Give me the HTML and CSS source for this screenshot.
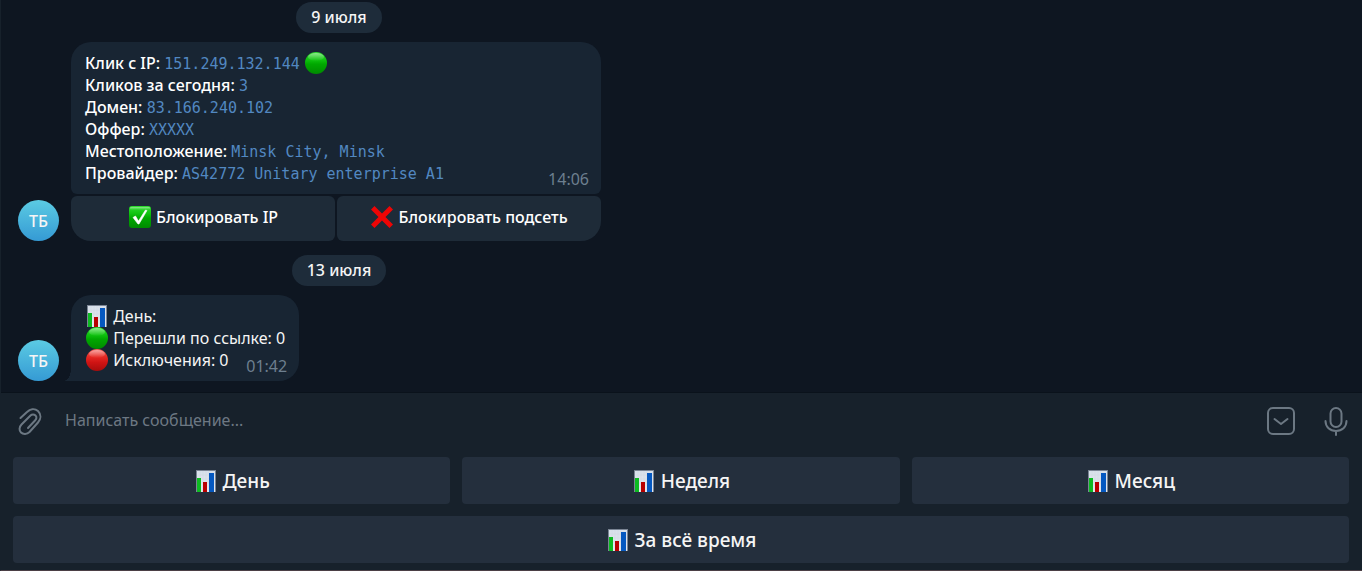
FILE: index.html
```html
<!DOCTYPE html>
<html lang="ru">
<head>
  <meta charset="UTF-8">
  <meta name="viewport" content="width=device-width, initial-scale=1.0">
  <title>Чат</title>
  <link rel="stylesheet" href="styles.css">
</head>
<body>

<!-- emoji shared by messages and buttons -->
<svg class="sprite" aria-hidden="true">
  <defs>
    <linearGradient id="greenFill" x1="0" y1="0" x2="0" y2="1">
      <stop offset="0" stop-color="#2fdc2f"/><stop offset=".35" stop-color="#0fc30f"/><stop offset=".55" stop-color="#00a800"/><stop offset="1" stop-color="#008a00"/>
    </linearGradient>
    <linearGradient id="redFill" x1="0" y1="0" x2="0" y2="1">
      <stop offset="0" stop-color="#f4605a"/><stop offset=".35" stop-color="#e62a24"/><stop offset=".6" stop-color="#d01414"/><stop offset="1" stop-color="#a80c0c"/>
    </linearGradient>
    <linearGradient id="shine" x1="0" y1="0" x2="0" y2="1">
      <stop offset="0" stop-color="#fff" stop-opacity=".45"/><stop offset="1" stop-color="#fff" stop-opacity="0"/>
    </linearGradient>
    <linearGradient id="paper" x1="0" y1="0" x2="0" y2="1">
      <stop offset="0" stop-color="#d8e0ea"/><stop offset="1" stop-color="#e4e8ee"/>
    </linearGradient>
  </defs>
  <symbol id="green" viewBox="0 0 22 22">
    <circle cx="11" cy="11" r="11" fill="url(#greenFill)"/>
    <ellipse cx="11" cy="5" rx="8" ry="4" fill="url(#shine)"/>
  </symbol>
  <symbol id="red" viewBox="0 0 22 22">
    <circle cx="11" cy="11" r="11" fill="url(#redFill)"/>
    <ellipse cx="11" cy="5" rx="8" ry="4" fill="url(#shine)"/>
  </symbol>
  <symbol id="chart" viewBox="0 0 22 22">
    <rect x="1" width="20" height="22" fill="#7b8594"/>
    <rect x="2" y="1" width="18" height="21" fill="url(#paper)"/>
    <path d="M5 1v21M8 1v21M11 1v21M14 1v21M2 5h18M2 9h18M2 13h18" stroke="#c9d3df" stroke-width=".4"/>
    <rect x="2" y="8" width="4" height="14" fill="#0dba22"/>
    <rect x="8" y="12" width="4" height="10" fill="#b80000"/>
    <rect x="14" y="3" width="5" height="19" fill="#0558c0"/>
  </symbol>
  <symbol id="check" viewBox="0 0 22 22">
    <rect width="22" height="22" rx="3" fill="url(#greenFill)"/>
    <rect x="1" y="1" width="20" height="3" rx="1" fill="url(#shine)"/>
    <path d="M4 11.500l2.500-1.500 3 5L16.500 4l1.500.5L10 18H9z" fill="#fff" stroke="#fff" stroke-width=".6" stroke-linejoin="round"/>
  </symbol>
  <symbol id="cross" viewBox="0 0 22 22">
    <path d="M3.500 0L11 7.500 18.500 0 22 3.500 14.500 11l7.500 7.500-3.500 3.500L11 14.500 3.500 22 0 18.500 7.500 11 0 3.500z" fill="#ee0505"/>
  </symbol>
</svg>

<main class="chat">
  <div class="history">
    <div class="date">9 июля</div>

    <div class="message">
      <div class="avatar">ТБ</div>
      <div class="content wide">
        <div class="bubble with-buttons">
          <p><b>Клик с IP:</b> <code>151.249.132.144</code> <svg class="emoji"><use href="#green"/></svg></p>
          <p><b>Кликов за сегодня:</b> <code>3</code></p>
          <p><b>Домен:</b> <code>83.166.240.102</code></p>
          <p><b>Оффер:</b> <code>XXXXX</code></p>
          <p><b>Местоположение:</b> <code>Minsk City, Minsk</code></p>
          <div class="last-line">
            <p><b>Провайдер:</b> <code>AS42772 Unitary enterprise A1</code></p>
            <time>14:06</time>
          </div>
        </div>
        <div class="inline-buttons">
          <button><svg class="emoji"><use href="#check"/></svg> Блокировать IP</button>
          <button><svg class="emoji"><use href="#cross"/></svg> Блокировать подсеть</button>
        </div>
      </div>
    </div>

    <div class="date">13 июля</div>

    <div class="message">
      <div class="avatar">ТБ</div>
      <div class="content">
        <div class="bubble tail">
          <p><svg class="emoji"><use href="#chart"/></svg> День:</p>
          <p><svg class="emoji"><use href="#green"/></svg> Перешли по ссылке: 0</p>
          <div class="last-line">
            <p><svg class="emoji"><use href="#red"/></svg> Исключения: 0</p>
            <time>01:42</time>
          </div>
        </div>
      </div>
    </div>
  </div>
</main>

<footer class="composer">
  <div class="input-row">
    <button class="icon" aria-label="Прикрепить файл">
      <svg width="28" height="30" viewBox="0 0 28 30"><path d="M4.500 12L11 6C14 3 18.500 2 22 5C25.500 8.500 25 13 22 16.500L13.500 26C11 28.500 7 28.500 5 26.500C3 24.500 3 21 5.500 18.500L14.500 9.500C16 8 18 8 19.500 9.500C21 11 20.500 13 19 14.500L12 22"/></svg>
    </button>
    <input type="text" aria-label="Сообщение" placeholder="Написать сообщение...">
    <button class="icon" aria-label="Скрыть клавиатуру">
      <svg width="28" height="28" viewBox="0 0 28 28"><rect x="1" y="1" width="26" height="26" rx="5"/><path d="M7.500 12l6.500 5 6.500-5"/></svg>
    </button>
    <button class="icon" aria-label="Голосовое сообщение">
      <svg width="24" height="30" viewBox="0 0 24 30"><rect x="6.500" y="2" width="11" height="19" rx="5.500"/><path d="M1.500 15c0 6 4.500 10 10.500 10s10.500-4 10.500-10M12 25v4"/></svg>
    </button>
  </div>
  <div class="keyboard">
    <button><svg class="emoji"><use href="#chart"/></svg> День</button>
    <button><svg class="emoji"><use href="#chart"/></svg> Неделя</button>
    <button><svg class="emoji"><use href="#chart"/></svg> Месяц</button>
    <button class="full"><svg class="emoji"><use href="#chart"/></svg> За всё время</button>
  </div>
</footer>

</body>
</html>
```
FILE: styles.css
```css
* { margin: 0; padding: 0; box-sizing: border-box; }
body { min-height: 100vh; display: flex; flex-direction: column; background: #0e1621; color: #f5f5f5; font: 16px/22px "Noto Sans", "Open Sans", sans-serif; border-left: 1px solid #17212b; border-bottom: 1px solid #4b3f45; }
button, input { font: inherit; color: inherit; border: none; background: none; }
button { cursor: pointer; }
.sprite { position: absolute; width: 0; height: 0; }
.emoji { width: 22px; height: 22px; margin: 0 1px; vertical-align: top; }

.chat { flex: 1; display: flex; flex-direction: column; justify-content: flex-end; padding: 2px 0 11px; }
.history { display: flex; flex-direction: column; max-width: 676px; }
.date { align-self: center; padding: 4px 15px 5px; margin-bottom: 9px; border-radius: 16px; background: #1e2c3a; font-weight: 500; }
.message { display: flex; align-items: flex-end; gap: 12px; padding: 0 12px 0 17px; }
.message + .date { margin-top: 14px; }
.avatar { flex: none; width: 41px; height: 41px; border-radius: 50%; background: linear-gradient(#5bcbe3, #359ad4); text-align: center; line-height: 42px; font-weight: 500; }
.wide { flex: 1; max-width: 530px; }
.bubble { padding: 10px 14px; border-radius: 20px; background: #182533; white-space: nowrap; }
.bubble b { font-weight: 500; color: #fff; }
.bubble code { color: #5288c1; font: 15px/15px "DejaVu Sans Mono", monospace; }
.with-buttons { border-radius: 20px 20px 6px 6px; margin-bottom: 2px; }
.last-line { display: flex; justify-content: space-between; align-items: flex-end; }
.last-line time { color: #6d7f8f; margin: 0 -2px -6px 0; }

/* bubble corner that points at the avatar */
.tail { position: relative; border-bottom-left-radius: 0; }
.tail::before { content: ""; position: absolute; left: -7px; bottom: 0; width: 7px; height: 12px; background: radial-gradient(ellipse 7px 12px at 0 0, transparent 96%, #182533 100%); }

.inline-buttons { display: grid; grid-template-columns: 1fr 1fr; gap: 2px; }
.inline-buttons button { padding: 10px 0 13px; border-radius: 6px; background: #1e2b38; color: #fff; font-weight: 500; }
.inline-buttons button:first-child { border-bottom-left-radius: 20px; }
.inline-buttons button:last-child { border-bottom-right-radius: 20px; }

.composer { background: #17212b; border-top: 1px solid #0a121b; padding: 0 13px 7px 12px; }
.input-row { display: flex; align-items: center; height: 64px; padding: 0 1px 8px 3px; }
.input-row input { flex: 1; min-width: 0; height: 40px; margin-left: 21px; padding-bottom: 2px; outline: none; }
.input-row input::placeholder { color: #6d7883; opacity: 1; }
.icon { display: flex; }
.icon + .icon { margin-left: 29px; }
.icon svg { fill: none; stroke: #6c7883; stroke-width: 2; stroke-linecap: round; stroke-linejoin: round; }
.keyboard { display: grid; grid-template-columns: repeat(3, 1fr); gap: 12px; }
.keyboard button { height: 47px; border-radius: 4px; background: #242f3d; font-size: 19px; font-weight: 500; }
.full { grid-column: 1 / -1; }
```
